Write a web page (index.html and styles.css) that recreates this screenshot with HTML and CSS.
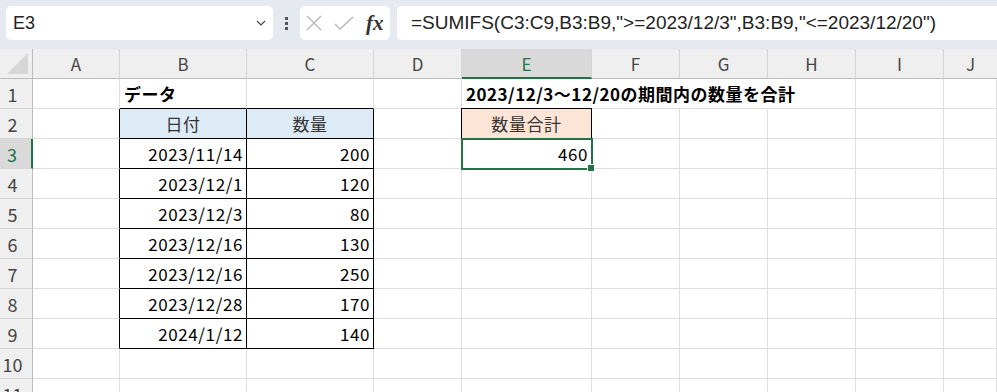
FILE: index.html
```html
<html>
  <head>
    <title>SUMIFS</title>
    <meta charset="utf-8" />
    <link rel="stylesheet" href="styles.css">
  </head>
  <body>
    <div class="toolbar">
      <div class="namebox">
        <span class="name">E3</span>
        <svg class="chevron" width="10" height="6" viewBox="0 0 10 6"><path d="M1 1 L5 5 L9 1" fill="none" stroke="#444" stroke-width="1.2"/></svg>
      </div>
      <div class="dots"><i></i><i></i><i></i></div>
      <div class="fxbox">
        <svg width="16" height="16" viewBox="0 0 16 16"><path d="M1 1 L15 15 M15 1 L1 15" stroke="#b5b5b5" stroke-width="1.3" fill="none"/></svg>
        <svg width="20" height="15" viewBox="0 0 20 15"><path d="M1 8 L6 13 L19 1" stroke="#b5b5b5" stroke-width="1.3" fill="none"/></svg>
        <span class="fx">fx</span>
      </div>
      <div class="formula">=SUMIFS(C3:C9,B3:B9,"&gt;=2023/12/3",B3:B9,"&lt;=2023/12/20")</div>
    </div>

    <div class="sheet">
      <div class="hd corner"></div>
      <div class="hd col">A</div>
      <div class="hd col">B</div>
      <div class="hd col">C</div>
      <div class="hd col">D</div>
      <div class="hd col active">E</div>
      <div class="hd col">F</div>
      <div class="hd col">G</div>
      <div class="hd col">H</div>
      <div class="hd col">I</div>
      <div class="hd col last">J</div>

      <div class="hd row">1</div>
      <div class="c"></div>
      <div class="c bold top">データ</div>
      <div class="c top"></div>
      <div class="c"></div>
      <div class="c bold spill">2023/12/3～12/20の期間内の数量を合計</div>
      <div class="c spill"></div>
      <div class="c spill"></div>
      <div class="c"></div>
      <div class="c"></div>
      <div class="c"></div>

      <div class="hd row">2</div>
      <div class="c edge"></div>
      <div class="c tb blue center">日付</div>
      <div class="c tb blue center">数量</div>
      <div class="c edge"></div>
      <div class="c tb peach center">数量合計</div>
      <div class="c"></div>
      <div class="c"></div>
      <div class="c"></div>
      <div class="c"></div>
      <div class="c"></div>

      <div class="hd row active">3</div>
      <div class="c edge"></div>
      <div class="c tb num">2023/11/14</div>
      <div class="c tb num">200</div>
      <div class="c"></div>
      <div class="c num selected">460</div>
      <div class="c"></div>
      <div class="c"></div>
      <div class="c"></div>
      <div class="c"></div>
      <div class="c"></div>

      <div class="hd row">4</div>
      <div class="c edge"></div>
      <div class="c tb num">2023/12/1</div>
      <div class="c tb num">120</div>
      <div class="c"></div><div class="c"></div><div class="c"></div><div class="c"></div><div class="c"></div><div class="c"></div><div class="c"></div>

      <div class="hd row">5</div>
      <div class="c edge"></div>
      <div class="c tb num">2023/12/3</div>
      <div class="c tb num">80</div>
      <div class="c"></div><div class="c"></div><div class="c"></div><div class="c"></div><div class="c"></div><div class="c"></div><div class="c"></div>

      <div class="hd row">6</div>
      <div class="c edge"></div>
      <div class="c tb num">2023/12/16</div>
      <div class="c tb num">130</div>
      <div class="c"></div><div class="c"></div><div class="c"></div><div class="c"></div><div class="c"></div><div class="c"></div><div class="c"></div>

      <div class="hd row">7</div>
      <div class="c edge"></div>
      <div class="c tb num">2023/12/16</div>
      <div class="c tb num">250</div>
      <div class="c"></div><div class="c"></div><div class="c"></div><div class="c"></div><div class="c"></div><div class="c"></div><div class="c"></div>

      <div class="hd row">8</div>
      <div class="c edge"></div>
      <div class="c tb num">2023/12/28</div>
      <div class="c tb num">170</div>
      <div class="c"></div><div class="c"></div><div class="c"></div><div class="c"></div><div class="c"></div><div class="c"></div><div class="c"></div>

      <div class="hd row">9</div>
      <div class="c edge"></div>
      <div class="c tb num">2024/1/12</div>
      <div class="c tb num">140</div>
      <div class="c"></div><div class="c"></div><div class="c"></div><div class="c"></div><div class="c"></div><div class="c"></div><div class="c"></div>

      <div class="hd row">10</div>
      <div class="c"></div><div class="c"></div><div class="c"></div><div class="c"></div><div class="c"></div><div class="c"></div><div class="c"></div><div class="c"></div><div class="c"></div><div class="c"></div>

      <div class="hd row">11</div>
      <div class="c"></div><div class="c"></div><div class="c"></div><div class="c"></div><div class="c"></div><div class="c"></div><div class="c"></div><div class="c"></div><div class="c"></div><div class="c"></div>
    </div>
  </body>
</html>
```

FILE: styles.css
```css
body {
  margin:0;
  background:#fff;
  width:997px;
  height:392px;
  overflow:hidden;
  font-family:'Noto Sans CJK JP', 'Noto Sans', sans-serif;
}

/* formula bar */

.toolbar {
  height:49px;
  background:#e6e9ef;
  display:flex;
  align-items:flex-start;
  padding:6px 0 0 6px;
  box-sizing:border-box;
}

.namebox {
  width:267px;
  height:34px;
  background:#fff;
  border-radius:5px;
  display:flex;
  align-items:center;
  justify-content:space-between;
  padding:0 6px 0 7px;
  box-sizing:border-box;
}

.name {
  font:18px 'Liberation Sans', sans-serif;
  color:#222;
}

.chevron {
  margin-right:1px;
}

.dots {
  width:27px;
  height:34px;
  display:flex;
  flex-direction:column;
  align-items:center;
  justify-content:center;
  gap:2px;
}

.dots i {
  width:3px;
  height:3px;
  background:#555;
  display:block;
}

.fxbox {
  width:90px;
  height:34px;
  background:#fff;
  border-radius:5px;
  display:flex;
  align-items:center;
  gap:12px;
  padding-left:6px;
  box-sizing:border-box;
}

.fx {
  font:italic bold 21px 'Liberation Serif', serif;
  color:#333;
}

.formula {
  margin-left:7px;
  flex:1;
  height:34px;
  background:#fff;
  border-radius:5px 0 0 5px;
  padding-left:14px;
  font:19px 'Liberation Sans', sans-serif;
  line-height:34px;
  color:#222;
}

/* sheet */

.sheet {
  display:grid;
  grid-template-columns:33px 87px 127px 127px 88px 130px 88px 88px 88px 88px 1fr;
  grid-auto-rows:30px;
}

.hd {
  background:#efefef;
  color:#444;
  font:18px 'Noto Sans CJK JP', sans-serif;
  display:flex;
  align-items:center;
  justify-content:center;
  box-sizing:border-box;
  border-right:1px solid #d4d4d4;
  border-bottom:1px solid #bcbcbc;
}

.hd.col {
  font-size:17px;
}

.hd.last {
  border-right:none;
}

.hd.row {
  padding-right:7px;
  border-right:1px solid #bcbcbc;
  border-bottom:1px solid #d4d4d4;
}

.hd.active {
  background:#d9d9d9;
  color:#217346;
}

.hd.col.active {
  border-bottom:2px solid #217346;
}

.hd.row.active {
  border-right:2px solid #217346;
}

.corner {
  position:relative;
  border-right:1px solid #bcbcbc;
}

.corner::after {
  content:'';
  position:absolute;
  right:4px;
  bottom:4px;
  border-style:solid;
  border-width:0 0 21px 21px;
  border-color:transparent transparent #d6d6d6 transparent;
}

.c {
  box-sizing:border-box;
  border-right:1px solid #dedede;
  border-bottom:1px solid #dedede;
  font:17px 'Noto Sans CJK JP', sans-serif;
  letter-spacing:0.6px;
  color:#000;
  display:flex;
  align-items:center;
  padding:0 3px;
  white-space:nowrap;
  position:relative;
}

.bold {
  font-weight:bold;
  letter-spacing:0.5px;
  padding-left:4px;
}

.spill {
  border-right-color:transparent;
}

.top {
  border-bottom-color:#000;
}

.edge {
  border-right-color:#000;
}

.tb {
  border-right-color:#000;
  border-bottom-color:#000;
}

.center {
  justify-content:center;
  color:#333;
}

.num {
  justify-content:flex-end;
}

.blue {
  background:#ddebf7;
}

.peach {
  background:#fce4d6;
  border-top:1px solid #000;
  margin-top:-1px;
  border-left:1px solid #000;
  margin-left:-1px;
}

.selected {
  outline:2px solid #217346;
  outline-offset:-1px;
  z-index:1;
}

.selected::after {
  content:'';
  position:absolute;
  right:-4px;
  bottom:-4px;
  width:6px;
  height:6px;
  background:#217346;
  border:1px solid #fff;
}
```
